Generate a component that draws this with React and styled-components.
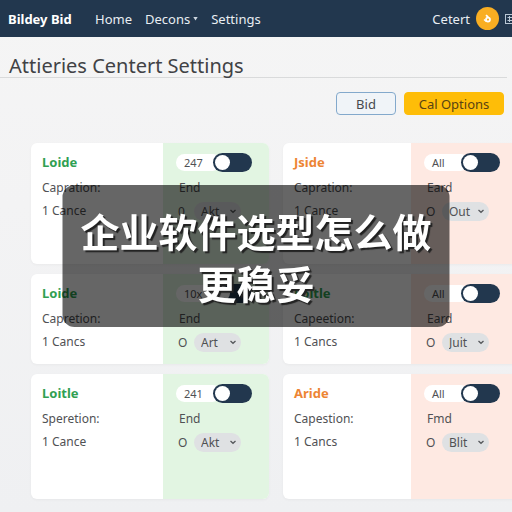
import React from "react";
import styled, { createGlobalStyle } from "styled-components";

const GlobalStyle = createGlobalStyle`
  *, *::before, *::after { box-sizing: border-box; }
  body {
    margin: 0;
    background: #f2f3f3;
    color: #505154;
    font-family: "Noto Sans", "Noto Sans CJK SC", sans-serif;
    font-size: 12px;
  }
  button, select, input { font: inherit; color: inherit; }
`;

const Page = styled.div`
  min-height: 100vh;
  overflow: hidden;
  background: linear-gradient(#f5f5f5, #f3f3f4 40%, #eff0f2);
`;

const Header = styled.header`
  display: flex;
  align-items: center;
  height: 37px;
  padding-left: 8px;
  background: #22374e;
  color: #e9eef3;
  font-size: 13px;
  white-space: nowrap;
`;

const Brand = styled.a`
  width: 87px;
  color: #fff;
  font-weight: 700;
  text-decoration: none;
`;

const Nav = styled.nav`
  display: flex;
  align-items: center;
  flex: 1;
  gap: 13px;
`;

const NavLink = styled.a`
  display: flex;
  align-items: center;
  gap: 3px;
  color: inherit;
  text-decoration: none;
`;

const Account = styled.div`
  display: flex;
  align-items: center;
  gap: 6px;
  margin-right: -6px;
`;

const Avatar = styled.button`
  display: grid;
  place-items: center;
  width: 23px;
  height: 23px;
  padding: 0;
  border: 0;
  border-radius: 50%;
  background: #f9ae22;
  color: #fff;
`;

const MenuButton = styled.button`
  display: grid;
  padding: 0;
  border: 0;
  background: none;
`;

const Title = styled.h1`
  height: 25px;
  margin: 16px 5px 0 0;
  padding-left: 9px;
  border-bottom: 1px solid #d9dadb;
  color: #414245;
  font-size: 20px;
  font-weight: 400;
  line-height: 25px;
  white-space: nowrap;
`;

const Actions = styled.div`
  display: flex;
  justify-content: flex-end;
  gap: 8px;
  padding: 14px 8px 0;
`;

const Action = styled.button`
  width: ${(p) => (p.$primary ? 100 : 60)}px;
  height: 23px;
  padding: 0;
  border: 1px solid ${(p) => (p.$primary ? "#febd08" : "#83a9cc")};
  border-radius: 4px;
  background: ${(p) => (p.$primary ? "#febd08" : "#f0f4f8")};
  color: ${(p) => (p.$primary ? "#594313" : "#47494d")};
  font-size: 13px;
  line-height: 20px;
`;

const Cards = styled.main`
  display: grid;
  grid-template-columns: 1fr 1fr;
  grid-template-rows: minmax(121px, auto) minmax(90px, auto) minmax(125px, auto);
  gap: 10px 14px;
  margin: 28px -9px 0 31px;
`;

const CardBox = styled.article`
  display: flex;
  overflow: hidden;
  border-radius: 6px;
  background: #fff;
  box-shadow: 0 1px 3px #0000000a;
`;

const Details = styled.div`
  flex: 1;
  padding: 6px 11px;
`;

const Side = styled.div`
  width: ${(p) => (p.$warm ? 110 : 106)}px;
  padding: 6px 0 6px 13px;
  background: ${(p) => (p.$warm ? "#fee9e2" : "#e2f5e2")};
`;

const Name = styled.h2`
  margin: 0;
  color: ${(p) => (p.$orange ? "#ed8534" : "#30a052")};
  font-size: 13px;
  font-weight: 700;
  line-height: 26px;
`;

const Label = styled.div`
  padding-left: ${(p) => (p.$inset ? 3 : 0)}px;
  line-height: 26px;
`;

const Value = styled.div`
  line-height: 20px;
`;

const SwitchRow = styled.label`
  display: flex;
  align-items: center;
  height: 26px;
`;

const Count = styled.span`
  width: 45px;
  height: 17px;
  margin-right: -8px;
  padding-left: 8px;
  border-radius: 9px;
  background: #fff;
  font-size: 11px;
  line-height: 17px;
`;

const Switch = styled.input`
  appearance: none;
  width: 39px;
  height: 19px;
  margin: 0;
  padding: 2px;
  border-radius: 10px;
  background: #22374e;

  &::before {
    content: "";
    display: block;
    width: 15px;
    height: 15px;
    border-radius: 50%;
    background: #fff;
  }
`;

const PickRow = styled.label`
  display: flex;
  align-items: center;
  gap: 6px;
  height: 20px;
  padding-left: 2px;
`;

const Mark = styled.span`
  width: 10px;
`;

const Picker = styled.span`
  display: grid;
  grid-template-columns: 35px 12px;
  align-items: center;
  border-radius: 10px;
  background: #dfe1e3;
`;

const Select = styled.select`
  grid-area: 1 / 1 / 2 / 3;
  appearance: none;
  width: 47px;
  height: 19px;
  padding: 0 0 0 7px;
  border: 0;
  border-radius: 10px;
  background: transparent;
  line-height: 19px;
`;

const Chevron = styled.svg`
  grid-area: 1 / 2;
  pointer-events: none;
`;

const Banner = styled.aside`
  position: fixed;
  top: 50%;
  left: 50%;
  width: max-content;
  padding: 19px 18px;
  transform: translate(-50%, -50%);
  border-radius: 12px;
  background: #0009;
  color: #fff;
  font-family: "Noto Sans CJK SC", sans-serif;
  font-size: 39px;
  font-weight: 700;
  line-height: 52px;
  text-align: center;
  text-shadow: 2px 2px 1px #222;
`;

const cards = [
  { name: "Loide", label: "Capration:", value: "1 Cance", count: "247", end: "End", mark: "0", pick: "Akt" },
  { name: "Jside", label: "Capration:", value: "1 Cance", count: "All", end: "Eard", mark: "O", pick: "Out", warm: true, orange: true },
  { name: "Loide", label: "Capretion:", value: "1 Cancs", count: "10x", end: "End", mark: "O", pick: "Art" },
  { name: "Loitle", label: "Capeetion:", value: "1 Cancs", count: "All", end: "Eard", mark: "O", pick: "Juit", warm: true },
  { name: "Loitle", label: "Speretion:", value: "1 Cance", count: "241", end: "End", mark: "O", pick: "Akt" },
  { name: "Aride", label: "Capestion:", value: "1 Cancs", count: "All", end: "Fmd", mark: "O", pick: "Blit", warm: true, orange: true },
];

function Card({ item, id }) {
  return (
    <CardBox>
      <Details>
        <Name $orange={item.orange}>{item.name}</Name>
        <Label>{item.label}</Label>
        <Value>{item.value}</Value>
      </Details>
      <Side $warm={item.warm}>
        <SwitchRow htmlFor={`switch-${id}`}>
          <Count>{item.count}</Count>
          <Switch id={`switch-${id}`} type="checkbox" role="switch" />
        </SwitchRow>
        <Label $inset>{item.end}</Label>
        <PickRow htmlFor={`pick-${id}`}>
          <Mark>{item.mark}</Mark>
          <Picker>
            <Select id={`pick-${id}`} defaultValue={item.pick}>
              <option>{item.pick}</option>
            </Select>
            <Chevron width="8" height="8" viewBox="0 0 8 8" fill="none" stroke="#55585c" strokeWidth="1.3">
              <path d="M1.5 3 4 5.3 6.5 3" />
            </Chevron>
          </Picker>
        </PickRow>
      </Side>
    </CardBox>
  );
}

export default function App() {
  return (
    <Page>
      <GlobalStyle />
      <Header>
        <Brand href="#">Bildey Bid</Brand>
        <Nav>
          <NavLink href="#">Home</NavLink>
          <NavLink href="#">
            Decons
            <svg width="5" height="5" viewBox="0 0 5 5" fill="#cdd6df">
              <path d="M0.3 1h4.4L2.5 4.6z" />
            </svg>
          </NavLink>
          <NavLink href="#">Settings</NavLink>
        </Nav>
        <Account>
          <span>Cetert</span>
          <Avatar aria-label="Account">
            <svg width="11" height="11" viewBox="0 0 11 11" fill="none" stroke="currentColor">
              <path d="M4 2.2 6.2 4.2" strokeWidth="1.8" />
              <circle cx="6" cy="6.6" r="2" strokeWidth="1.7" />
              <path d="M2 6.4 4.2 8.4" strokeWidth="1.3" />
            </svg>
          </Avatar>
          <MenuButton aria-label="Menu">
            <svg width="13" height="12" viewBox="0 0 13 12" fill="none" stroke="#b9c7d5">
              <path d="M0.5 1.5h12M0.5 1v10M0.5 10.5h12M2.5 4.5h9M2.5 7.5h9M4.5 3v6" />
            </svg>
          </MenuButton>
        </Account>
      </Header>
      <Title>Attieries Centert Settings</Title>
      <Actions>
        <Action>Bid</Action>
        <Action $primary>Cal Options</Action>
      </Actions>
      <Cards>
        {cards.map((item, i) => (
          <Card key={i} id={i} item={item} />
        ))}
      </Cards>
      <Banner>
        企业软件选型怎么做
        <br />
        更稳妥
      </Banner>
    </Page>
  );
}
